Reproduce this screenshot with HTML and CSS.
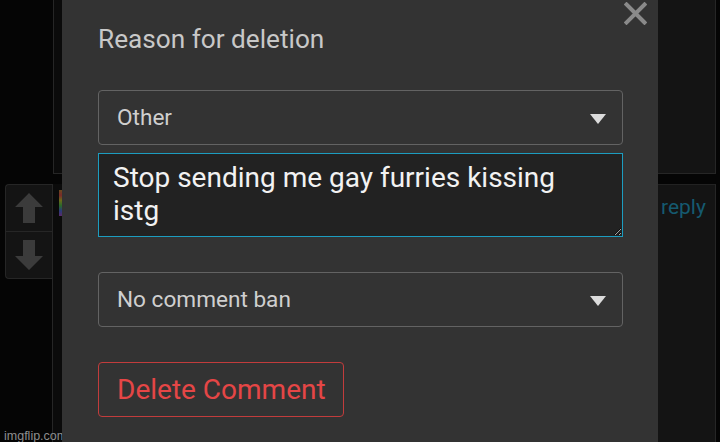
FILE: index.html
```html
<!DOCTYPE html>
<html>
<head>
<meta charset="utf-8">
<link rel="stylesheet" href="styles.css">
</head>
<body>
<div class="page">
  <div class="col-left">
    <div class="panel-top-left"></div>
    <div class="left-row">
      <div class="vote">
        <div class="vote-btn">
          <svg width="28" height="30" viewBox="0 0 28 30"><path d="M14 0 L28 14 L20 14 L20 30 L8 30 L8 14 L0 14 Z" fill="#3b3b3b"/></svg>
        </div>
        <div class="vote-btn">
          <svg width="28" height="30" viewBox="0 0 28 30"><path d="M14 30 L28 16 L20 16 L20 0 L8 0 L8 16 L0 16 Z" fill="#3b3b3b"/></svg>
        </div>
      </div>
      <div class="avatar-edge"></div>
    </div>
    <div class="watermark">imgflip.com</div>
  </div>

  <div class="modal">
    <div class="close">
      <svg width="23" height="23" viewBox="0 0 23 23"><path d="M2.5 2.5 L20.5 20.5 M20.5 2.5 L2.5 20.5" stroke="#8a8a8a" stroke-width="4" stroke-linecap="square"/></svg>
    </div>
    <div class="title">Reason for deletion</div>
    <div class="select select-reason">
      <span>Other</span>
      <span class="caret"></span>
    </div>
    <textarea class="note">Stop sending me gay furries kissing
istg</textarea>
    <div class="select select-ban">
      <span>No comment ban</span>
      <span class="caret"></span>
    </div>
    <div class="delete-btn">Delete Comment</div>
  </div>

  <div class="col-right">
    <div class="panel-top-right"></div>
    <div class="panel-reply"><span class="reply">reply</span></div>
  </div>
</div>
</body>
</html>
```

FILE: styles.css
```css
html, body {
  margin: 0;
  padding: 0;
  background: #050505;
  overflow: hidden;
}
.page {
  width: 720px;
  height: 442px;
  display: grid;
  grid-template-columns: 62px 596px 62px;
  font-family: Roboto, "Liberation Sans", sans-serif;
  overflow: hidden;
}
.col-left {
  position: relative;
  display: flex;
  flex-direction: column;
}
.panel-top-left {
  height: 173px;
  margin-left: 53px;
  background: #0b0b0b;
  border-left: 1px solid #262626;
  border-bottom: 1px solid #262626;
  box-sizing: content-box;
  width: 8px;
}
.left-row {
  margin-top: 10px;
  display: flex;
  align-items: flex-start;
}
.vote {
  margin-left: 5px;
  width: 47px;
  background: #141414;
  border: 1px solid #262626;
  border-right: none;
  border-radius: 4px 0 0 4px;
  display: flex;
  flex-direction: column;
}
.vote-btn {
  height: 46px;
  display: flex;
  align-items: center;
  justify-content: center;
}
.vote-btn + .vote-btn {
  border-top: 1px solid #262626;
}
.avatar-edge {
  width: 9px;
  height: 260px;
  background: #0b0b0b;
  border-left: 1px solid #262626;
  position: relative;
}
.avatar-edge::after {
  content: "";
  position: absolute;
  left: 6px;
  top: 6px;
  width: 3px;
  height: 26px;
  background: linear-gradient(#6a4a1e, #7a2a2a, #6a6a1a, #2a6a2a, #2a3a7a, #5a2a6a);
}
.watermark {
  position: absolute;
  left: 4px;
  bottom: 2px;
  font-family: "Liberation Sans", Arial, sans-serif;
  font-size: 12.5px;
  color: #8e8e8e;
}
.modal {
  position: relative;
  background: #333333;
  padding: 24px 35px 0 36px;
  display: flex;
  flex-direction: column;
  align-items: flex-start;
}
.close {
  position: absolute;
  left: 562px;
  top: 2px;
  width: 23px;
  height: 23px;
}
.close svg { display: block; }
.title {
  font-size: 26.2px;
  line-height: 30px;
  color: #c8c8c8;
  margin-bottom: 36px;
}
.select {
  box-sizing: border-box;
  width: 525px;
  height: 55px;
  border: 1px solid #636363;
  border-radius: 4px;
  padding: 0 16px 0 18px;
  display: flex;
  align-items: center;
  justify-content: space-between;
  font-size: 22.6px;
  color: #cfcfcf;
}
.caret {
  width: 0;
  height: 0;
  border-left: 8.5px solid transparent;
  border-right: 8.5px solid transparent;
  border-top: 10px solid #dcdcdc;
  margin-top: 2px;
}
.note {
  box-sizing: border-box;
  width: 525px;
  height: 84px;
  margin: 8px 0 35px;
  border: 1px solid #1c9dc0;
  border-radius: 0;
  background: #222222;
  color: #f2f2f2;
  font-family: Roboto, "Liberation Sans", sans-serif;
  font-size: 28px;
  line-height: 33px;
  padding: 7px 14px 5px;
  outline: none;
  overflow: hidden;
  resize: vertical;
}
.select-ban {
  margin-bottom: 35px;
}
.delete-btn {
  box-sizing: border-box;
  height: 55px;
  width: 246px;
  border: 1px solid #c23c3c;
  border-radius: 4px;
  padding-left: 18px;
  display: flex;
  align-items: center;
  font-size: 28px;
  color: #e54646;
}
.col-right {
  display: flex;
  flex-direction: column;
}
.panel-top-right {
  height: 173px;
  width: 57px;
  background: #141414;
  border-right: 1px solid #262626;
  border-bottom: 1px solid #262626;
}
.panel-reply {
  margin-top: 10px;
  height: 260px;
  width: 57px;
  background: #141414;
  border-right: 1px solid #262626;
  border-top: 1px solid #222;
}
.reply {
  display: block;
  margin: 10px 0 0 3px;
  font-size: 21px;
  color: #155a70;
}
```
